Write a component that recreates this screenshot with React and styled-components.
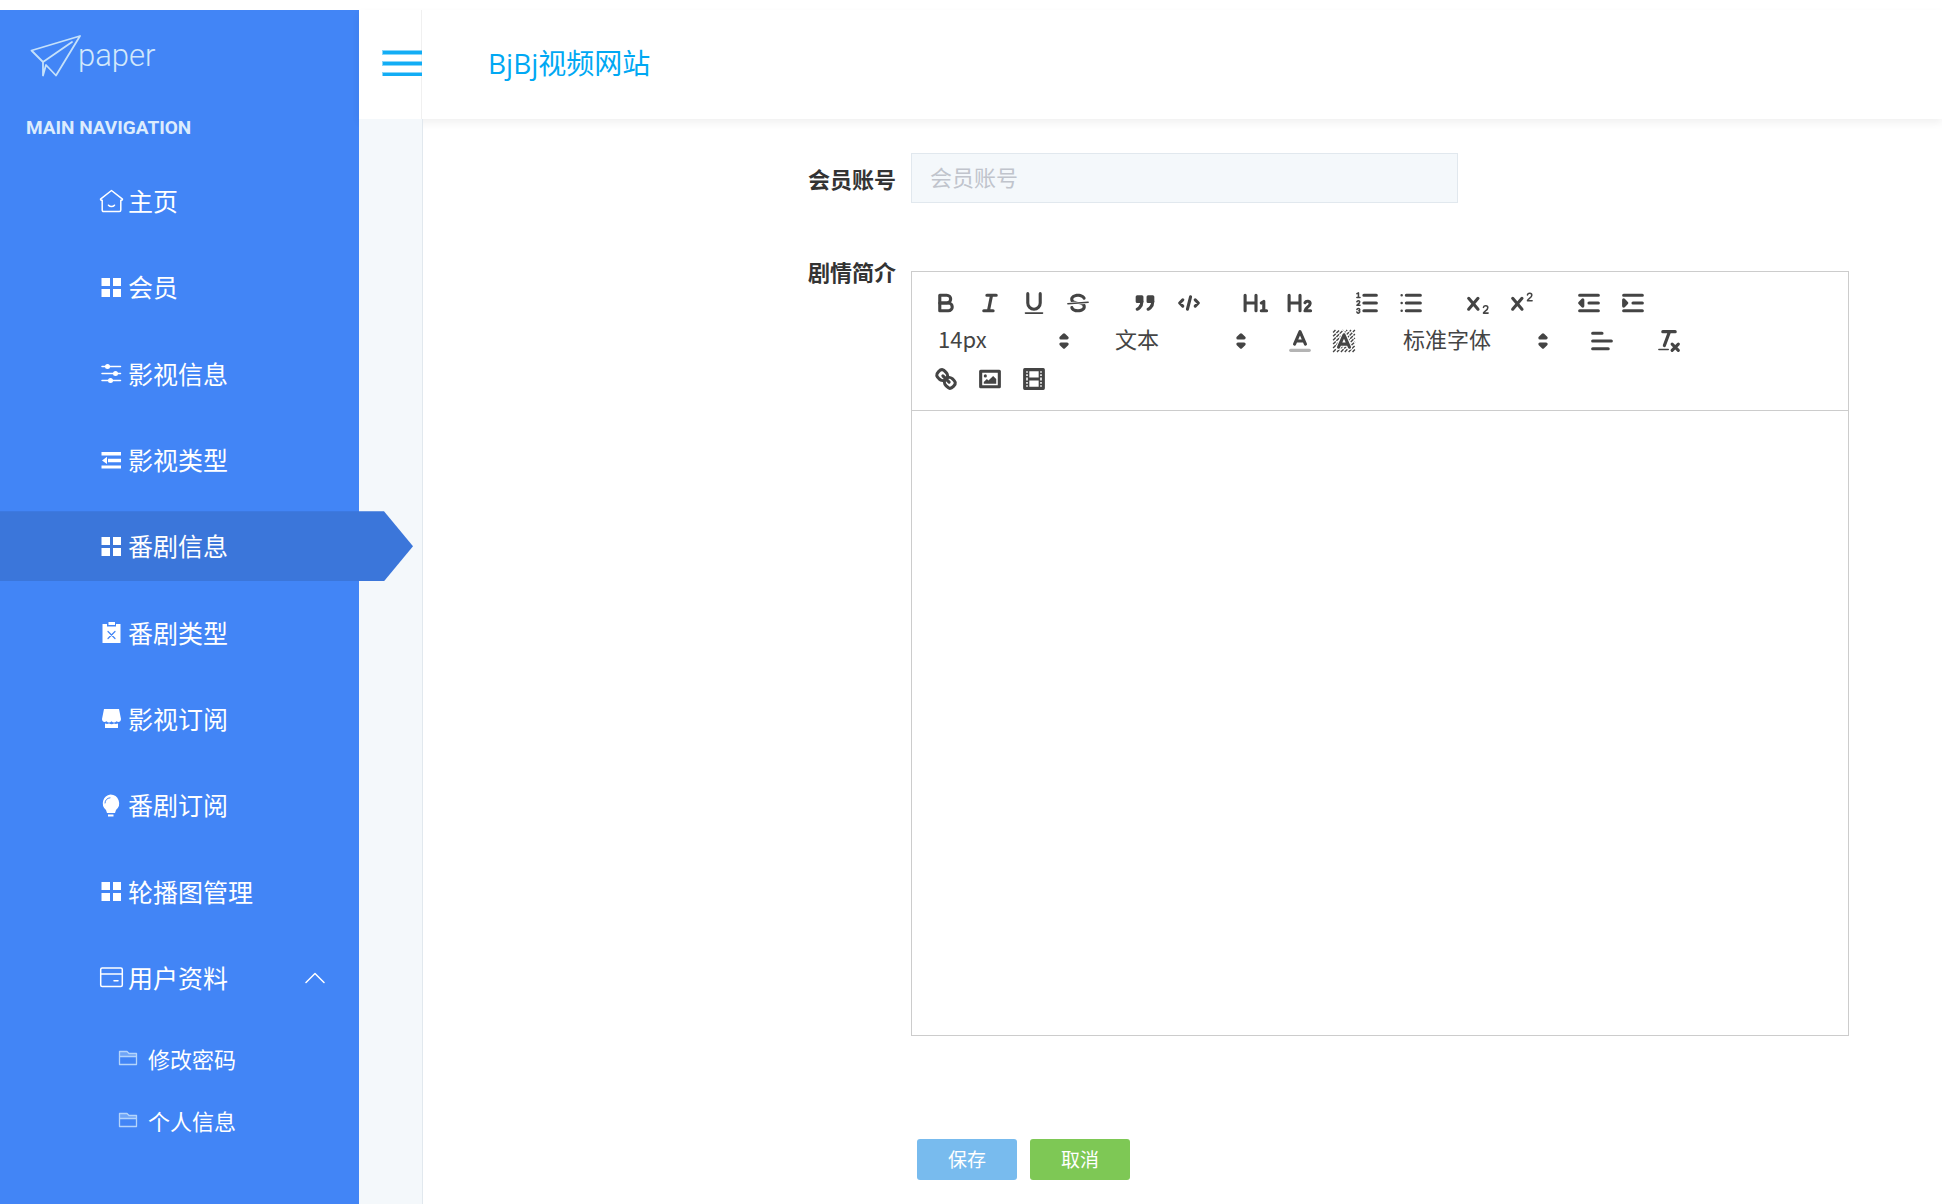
import React from 'react';
import styled, { createGlobalStyle } from 'styled-components';

const GlobalStyle = createGlobalStyle`
  *, *::before, *::after {
    box-sizing: border-box;
  }

  body {
    margin: 0;
    background: #fff;
    color: #333;
    font-family: 'Open Sans', 'Noto Sans CJK SC', sans-serif;
  }
`;

const Page = styled.div`
  display: flex;
  min-height: 100vh;
  padding-top: 10px;
`;

const Sidebar = styled.aside`
  flex: none;
  width: 359px;
  background: #4285f6;
  color: #fff;
`;

const Logo = styled.div`
  display: flex;
  padding: 24px 0 0 30px;

  svg {
    overflow: visible;
  }
`;

const Paper = styled.span`
  font-family: Roboto, sans-serif;
  font-size: 31px;
  font-weight: 300;
  line-height: 44px;
  color: #d2e8fb;
`;

const NavTitle = styled.h2`
  margin: 0;
  padding: 38px 0 0 26px;
  font-family: Roboto, sans-serif;
  font-size: 19px;
  font-weight: 700;
  line-height: 24px;
  color: #dcecfd;
`;

const Menu = styled.ul`
  display: grid;
  grid-template-columns: minmax(0, 1fr);
  grid-auto-rows: 1fr;
  min-height: 863px;
  margin: 0;
  padding: 0;
  list-style: none;
`;

const Nav = styled.nav`
  padding-top: 18px;
`;

const MenuItem = styled.li`
  display: flex;
  align-items: center;
`;

const MenuLink = styled.a`
  display: flex;
  flex: none;
  align-items: center;
  gap: 4px;
  width: ${({ $active }) => ($active ? '413px' : '100%')};
  height: 70px;
  padding: 0 34px 0 99px;
  background: ${({ $active }) => ($active ? '#3b76da' : 'transparent')};
  clip-path: ${({ $active }) =>
    $active ? 'polygon(0 0, 384px 0, 100% 50%, 384px 100%, 0 100%)' : 'none'};
  color: #fff;
  font-size: 25px;
  line-height: 36px;
  text-decoration: none;

  svg {
    flex: none;
  }

  svg:last-child {
    margin-left: auto;
  }
`;

const SubMenu = styled.ul`
  margin: 0;
  padding: 6px 0 0;
  list-style: none;
`;

const SubLink = styled.a`
  display: flex;
  align-items: center;
  gap: 10px;
  height: 62px;
  padding-left: 118px;
  color: #fff;
  font-size: 22px;
  text-decoration: none;
`;

const Content = styled.div`
  display: flex;
  flex: 1;
  flex-direction: column;
  min-width: 0;
`;

const Header = styled.header`
  display: flex;
  align-items: stretch;
  height: 109px;
  background: #fff;
  box-shadow: 0 4px 8px rgba(0, 0, 0, 0.06);
`;

const ToggleButton = styled.button`
  display: flex;
  align-items: center;
  justify-content: flex-end;
  width: 63px;
  padding: 0 0 3px;
  border: 0;
  border-right: 1px solid #f0f0f0;
  background: none;

  svg {
    margin-right: -1px;
  }
`;

const SiteTitle = styled.h1`
  margin: 0;
  padding-left: 66px;
  color: #00a8f3;
  font-size: 28px;
  font-weight: 400;
  line-height: 107px;
`;

const Body = styled.div`
  display: flex;
  flex: 1;
`;

const Gutter = styled.div`
  flex: none;
  width: 64px;
  border-right: 1px solid #e1e8ee;
  background: #f4f8fb;
`;

const Form = styled.form`
  display: flex;
  flex: 1;
  flex-direction: column;
  min-width: 0;
  padding: 34px 93px 24px 0;
`;

const Field = styled.div`
  display: flex;
  align-items: flex-start;
  margin-bottom: 41px;
`;

const Label = styled.label`
  flex: none;
  width: 488px;
  padding-right: 15px;
  color: #333;
  font-size: 22px;
  font-weight: 700;
  line-height: 52px;
  text-align: right;
`;

const TextInput = styled.input`
  width: 547px;
  height: 50px;
  padding: 0 18px 2px;
  border: 1px solid #e1e8ee;
  border-radius: 0;
  background: #f4f8fb;
  font-family: inherit;
  font-size: 22px;

  &::placeholder {
    color: #c0c4cc;
  }
`;

const Editor = styled.div`
  flex: 1;
  min-width: 0;
  margin-top: 25px;
  border: 1px solid #ccc;
`;

const Toolbar = styled.div`
  padding: 12px;
  border-bottom: 1px solid #ccc;
`;

const ToolRow = styled.div`
  display: flex;
  gap: 23px;
  height: 38px;
`;

const ToolGroup = styled.span`
  display: flex;
`;

const ToolButton = styled.button`
  display: flex;
  align-items: center;
  justify-content: center;
  width: 44px;
  height: 38px;
  padding: 0;
  border: 0;
  background: none;
  color: #444;
`;

const Picker = styled.span`
  position: relative;
  width: ${({ $wide }) => ($wide ? '168px' : '154px')};
  color: #444;

  svg {
    position: absolute;
    top: 5px;
    right: 0;
    pointer-events: none;
  }
`;

const PickerSelect = styled.select`
  width: 100%;
  height: 30px;
  padding: 0 28px 0 14px;
  border: 0;
  appearance: none;
  background: none;
  color: #444;
  font-family: 'Noto Sans CJK SC', sans-serif;
  font-size: 22px;
`;

const EditArea = styled.textarea`
  display: block;
  width: 100%;
  height: 624px;
  padding: 18px 24px;
  border: 0;
  outline: 0;
  resize: none;
  background: none;
  font-family: inherit;
  font-size: 20px;
`;

const Actions = styled.div`
  display: flex;
  gap: 13px;
  padding: 62px 0 0 494px;
`;

const ActionButton = styled.button`
  width: 100px;
  height: 41px;
  padding: 0 0 2px;
  border: 0;
  border-radius: 3px;
  background: ${({ $color }) => $color};
  color: #fff;
  font-family: inherit;
  font-size: 19px;
`;

const Stroke = styled.svg`
  fill: none;
  stroke: currentColor;
  stroke-width: 2;
  stroke-linecap: round;
  stroke-linejoin: round;

  .fill {
    fill: currentColor;
  }

  .solid {
    fill: currentColor;
    stroke: none;
  }

  .thin {
    stroke-width: 1;
  }
`;

const QIcon = ({ children }) => (
    <Stroke width="28" height="28" viewBox="0 0 18 18" aria-hidden="true">{children}</Stroke>
);

// diagonal hatching inside a 14x14 square
const hatch = [5.5, 8, 10.5, 13, 15.5, 18, 20.5, 23, 25.5, 28, 30.5]
    .map(sum => {
        const from = Math.max(2, sum - 16);
        const to = Math.min(16, sum - 2);
        return `M${from} ${sum - from}L${to} ${sum - to}`;
    })
    .join('');

const tools = {
    bold: (
        <>
            <path d="M5,4H9.5A2.5,2.5,0,0,1,12,6.5v0A2.5,2.5,0,0,1,9.5,9H5Z" />
            <path d="M5,9h5.5A2.5,2.5,0,0,1,13,11.5v0A2.5,2.5,0,0,1,10.5,14H5Z" />
        </>
    ),
    italic: <path d="M7 4H13M5 14H11M8 14L10 4" />,
    underline: (
        <>
            <path d="M5,3V9a4,4,0,0,0,8,0V3" />
            <rect className="solid" height="1" width="12" x="3" y="15" rx="0.5" />
        </>
    ),
    strike: (
        <>
            <path className="thin" d="M15.5 8.5L2.5 9.5" />
            <path className="solid" d="M9.007,8C6.542,7.791,6,7.519,6,6.5,6,5.792,7.283,5,9,5c1.571,0,2.765.679,2.969,1.309a1,1,0,0,0,1.9-.617C13.356,4.106,11.354,3,9,3,6.2,3,4,4.538,4,6.5a3.2,3.2,0,0,0,.5,1.843Z" />
            <path className="solid" d="M8.984,10C11.457,10.208,12,10.479,12,11.5c0,0.708-1.283,1.5-3,1.5-1.571,0-2.765-.679-2.969-1.309a1,1,0,1,0-1.9.617C4.644,13.894,6.646,15,9,15c2.8,0,5-1.538,5-3.5a3.2,3.2,0,0,0-.5-1.843Z" />
        </>
    ),
    quote: (
        <>
            <rect className="fill" height="3" width="3" x="4" y="5" />
            <rect className="fill" height="3" width="3" x="11" y="5" />
            <path className="fill" d="M7,8c0,4.031-3,5-3,5" />
            <path className="fill" d="M14,8c0,4.031-3,5-3,5" />
        </>
    ),
    code: <path d="M5 7L3 9L5 11M13 7L15 9L13 11M10 5L8 13" />,
    h1: (
        <>
            <path d="M2 4V14M9 4V14M2 9H9" />
            <path d="M12.4 9L14 8V14M12.4 14H15.8" />
        </>
    ),
    h2: (
        <>
            <path d="M2 4V14M9 4V14M2 9H9" />
            <path d="M12.2 8.8C13 7.4 15.6 7.6 15.5 9.5C15.4 11.3 12.3 12.1 12.2 14H15.8" />
        </>
    ),
    ordered: (
        <>
            <path d="M7 4H15M7 9H15M7 14H15" />
            <path className="thin" d="M2.5 5.5H4.5M2.5 3L3.5 2.5V5.5" />
            <path className="thin" d="M4.5,10.5h-2c0-.234,1.85-1.076,1.85-2.234A.959.959,0,0,0,2.5,8.156" />
            <path className="thin" d="M2.5,14.846a.959.959,0,0,0,1.85-.11A.7.7,0,0,0,3.75,14a.688.688,0,0,0,.6-.736.959.959,0,0,0-1.85-.109" />
        </>
    ),
    bullet: (
        <>
            <path d="M6 4H15M6 9H15M6 14H15" />
            <path strokeWidth="1.6" d="M3 4H3.01M3 9H3.01M3 14H3.01" />
        </>
    ),
    sub: (
        <>
            <path d="M3 6L9 13M9 6L3 13" />
            <path className="thin" d="M12.5 11.8C12.9 10.3 15.3 10.5 15.3 12C15.3 13.9 12.5 14.3 12.5 15.5H15.5" />
        </>
    ),
    sup: (
        <>
            <path d="M3 6L9 13M9 6L3 13" />
            <path className="thin" d="M12.5 3.8C12.9 2.3 15.3 2.5 15.3 4C15.3 5.9 12.5 6.3 12.5 7.5H15.5" />
        </>
    ),
    outdent: (
        <>
            <path d="M3 4H15M9 9H15M3 14H15" />
            <path className="fill" d="M5 7V11L3 9Z" />
        </>
    ),
    indent: (
        <>
            <path d="M3 4H15M9 9H15M3 14H15" />
            <path className="fill" d="M3 7V11L5 9Z" />
        </>
    ),
    color: (
        <>
            <path opacity="0.4" d="M3 15H15" />
            <path d="M5.5 11L9 3L12.5 11M11.63 9H6.38" />
        </>
    ),
    background: (
        <>
            <path strokeWidth="0.9" strokeLinecap="butt" strokeDasharray="2.4 0.6" d={hatch} />
            <path stroke="#fff" strokeWidth="3.4" d="M5.5 13L9 5L12.5 13M11.63 11H6.38" />
            <path d="M5.5 13L9 5L12.5 13M11.63 11H6.38" />
        </>
    ),
    align: <path d="M3 4H9M3 9H15M3 14H13" />,
    clean: (
        <>
            <path d="M5 3H13M6 12L9.35 3M11 11L15 15M15 11L11 15" />
            <rect className="solid" height="1" width="7" x="2" y="14" rx="0.5" />
        </>
    ),
    link: (
        <>
            <path d="M7 7L11 11" />
            <path d="M8.9,4.577a3.476,3.476,0,0,1,.36,4.679A3.476,3.476,0,0,1,4.577,8.9C3.185,7.5,2.035,6.4,4.217,4.217S7.5,3.185,8.9,4.577Z" />
            <path d="M13.423,9.1a3.476,3.476,0,0,0-4.679-.36,3.476,3.476,0,0,0,.36,4.679c1.392,1.392,2.5,2.542,4.679.36S14.815,10.5,13.423,9.1Z" />
        </>
    ),
    image: (
        <>
            <rect height="10" width="12" x="3" y="4" />
            <circle className="solid" cx="6" cy="7" r="1" />
            <path className="solid" d="M5 12V11L7 9L8 10L11 7L13 9V12Z" />
        </>
    ),
    video: (
        <>
            <rect height="12" width="12" x="3" y="3" />
            <path className="solid" d="M5 3H6V15H5ZM12 3H13V15H12ZM5 8H13V10H5ZM3 5H6V6H3ZM3 7H6V8H3ZM3 10H6V11H3ZM3 12H6V13H3ZM12 5H15V6H12ZM12 7H15V8H12ZM12 10H15V11H12ZM12 12H15V13H12Z" />
        </>
    )
};

const menuIcons = {
    home: <path strokeWidth="1.5" d="M1.5 10.2L12.5 1.5L23.5 10.2L22.8 11.2H21.8V21C21.8 22 21.3 22.5 20.3 22.5H4.7C3.7 22.5 3.2 22 3.2 21V11.2H2.2ZM9.5 16.2C11 18 14 18 15.5 16.2" />,
    grid: <path className="solid" d="M2.5 3H11V11H2.5ZM14 3H22V11H14ZM2.5 14H11V22H2.5ZM14 14H22V22H14Z" />,
    sliders: (
        <>
            <path strokeWidth="1.5" d="M3 5.5H21.5M3 12.5H21.5M3 19.5H21.5" />
            <circle className="solid" cx="8.5" cy="5.5" r="2.5" />
            <circle className="solid" cx="16.5" cy="12.5" r="2.5" />
            <circle className="solid" cx="11.5" cy="19.5" r="2.5" />
        </>
    ),
    fold: <path className="solid" d="M2.5 4H22V7.4H2.5ZM9 10.8H22V14.2H9ZM2.5 17.4H22V20.6H2.5ZM8 8.8V16L3 12.4Z" />,
    clipboard: (
        <>
            <path className="solid" d="M3.5 4H8V6.5H17V4H21.5V23H3.5Z" />
            <rect className="solid" x="9.5" y="2" width="6.5" height="3" />
            <path stroke="#4285f6" strokeWidth="1.2" d="M9 11.5L16 18.5M16 11.5L9 18.5" />
        </>
    ),
    shop: (
        <>
            <path className="solid" d="M5 3H20L22 13C22 15.5 19.5 17 17.5 15.2C16 17 14 17 12.5 15.2C11 17 9 17 7.5 15.2C5.5 17 3 15.5 3 13Z" />
            <path className="solid" d="M6 17.5C8 18.2 9 17.8 10 17.5C12 18.4 13.5 18.4 15 17.5C16.5 18.2 17.5 18 19 17.5V22H6Z" />
        </>
    ),
    bulb: (
        <>
            <path className="solid" d="M11.5 1.5A8.8 8.8 0 0 1 17 17L16 20H8L7 17A8.8 8.8 0 0 1 11.5 1.5ZM9 21.5H14.5V23.5H9Z" />
            <path stroke="#4285f6" strokeWidth="1" d="M6 10C6.1 7.2 8 5 11 4.8" />
        </>
    ),
    card: (
        <>
            <rect strokeWidth="1.5" x="1.7" y="3" width="21.6" height="18.5" rx="1.5" />
            <path strokeWidth="1.5" d="M2 9H23M15 15.7H19" />
        </>
    )
};

const MenuIcon = ({ name }) => (
    <Stroke width="25" height="25" viewBox="0 0 25 25" aria-hidden="true">{menuIcons[name]}</Stroke>
);

const FolderIcon = () => (
    <Stroke width="20" height="16" viewBox="0 0 20 16" color="#b4d4fb" aria-hidden="true">
        <path className="solid" opacity="0.4" d="M1 1H9L11 3H19V6H1Z" />
        <path strokeWidth="1.3" d="M1.5 14.5V1.5H9L11 3.5H18.5V14.5ZM1.5 6.5H18.5" />
    </Stroke>
);

const items = [
    { label: '主页', icon: 'home' },
    { label: '会员', icon: 'grid' },
    { label: '影视信息', icon: 'sliders' },
    { label: '影视类型', icon: 'fold' },
    { label: '番剧信息', icon: 'grid', active: true },
    { label: '番剧类型', icon: 'clipboard' },
    { label: '影视订阅', icon: 'shop' },
    { label: '番剧订阅', icon: 'bulb' },
    { label: '轮播图管理', icon: 'grid' },
    { label: '用户资料', icon: 'card', open: true }
];

const Tools = ({ names }) => (
    <ToolGroup>
        {names.map(name => (
            <ToolButton key={name} type="button" aria-label={name}>
                <QIcon>{tools[name]}</QIcon>
            </ToolButton>
        ))}
    </ToolGroup>
);

const ToolPicker = ({ label, value, wide }) => (
    <Picker $wide={wide}>
        <PickerSelect aria-label={label}>
            <option>{value}</option>
        </PickerSelect>
        <QIcon>
            <path className="fill" d="M7 11L9 13L11 11Z" />
            <path className="fill" d="M7 7L9 5L11 7Z" />
        </QIcon>
    </Picker>
);

const App = () => (
    <>
        <GlobalStyle />
        <Page>
            <Sidebar>
                <Logo>
                    <Stroke width="48" height="44" viewBox="0 0 48 44" color="#c5e1fa" aria-hidden="true">
                        <path strokeWidth="1.8" d="M1.5 16.5L50 2L26 41.5L16 31L13 41.5V28L1.5 16.5ZM13 28L42 8" />
                    </Stroke>
                    <Paper>paper</Paper>
                </Logo>
                <NavTitle>MAIN NAVIGATION</NavTitle>
                <Nav>
                    <Menu>
                        {items.map(item => (
                            <MenuItem key={item.label}>
                                <MenuLink href="#" $active={item.active}>
                                    <MenuIcon name={item.icon} />
                                    <span>{item.label}</span>
                                    {item.open && (
                                        <Stroke width="20" height="12" viewBox="0 0 20 12" aria-hidden="true">
                                            <path strokeWidth="1.5" d="M1 10.5L10 1.5L19 10.5" />
                                        </Stroke>
                                    )}
                                </MenuLink>
                            </MenuItem>
                        ))}
                    </Menu>
                    <SubMenu>
                        {['修改密码', '个人信息'].map(label => (
                            <li key={label}>
                                <SubLink href="#">
                                    <FolderIcon />
                                    {label}
                                </SubLink>
                            </li>
                        ))}
                    </SubMenu>
                </Nav>
            </Sidebar>
            <Content>
                <Header>
                    <ToggleButton type="button" aria-label="menu">
                        <svg width="40" height="26" viewBox="0 0 40 26" fill="#12adf5" aria-hidden="true">
                            <path opacity="0.5" d="M0 0H40V5H0ZM0 11H40V16H0ZM0 22H40V26H0Z" />
                            <path d="M1 1H40V4H1ZM1 12H40V15H1ZM1 23H40V26H1Z" />
                        </svg>
                    </ToggleButton>
                    <SiteTitle>BjBj视频网站</SiteTitle>
                </Header>
                <Body>
                    <Gutter />
                    <Form>
                        <Field>
                            <Label htmlFor="account">会员账号</Label>
                            <TextInput id="account" type="text" placeholder="会员账号" />
                        </Field>
                        <Field>
                            <Label htmlFor="intro">剧情简介</Label>
                            <Editor>
                                <Toolbar>
                                    <ToolRow>
                                        <Tools names={['bold', 'italic', 'underline', 'strike']} />
                                        <Tools names={['quote', 'code']} />
                                        <Tools names={['h1', 'h2']} />
                                        <Tools names={['ordered', 'bullet']} />
                                        <Tools names={['sub', 'sup']} />
                                        <Tools names={['outdent', 'indent']} />
                                    </ToolRow>
                                    <ToolRow>
                                        <ToolPicker label="size" value="14px" />
                                        <ToolPicker label="header" value="文本" />
                                        <Tools names={['color', 'background']} />
                                        <ToolPicker label="font" value="标准字体" wide />
                                        <Tools names={['align']} />
                                        <Tools names={['clean']} />
                                    </ToolRow>
                                    <ToolRow>
                                        <Tools names={['link', 'image', 'video']} />
                                    </ToolRow>
                                </Toolbar>
                                <EditArea id="intro" />
                            </Editor>
                        </Field>
                        <Actions>
                            <ActionButton type="submit" $color="#78bbee">保存</ActionButton>
                            <ActionButton type="button" $color="#7ec855">取消</ActionButton>
                        </Actions>
                    </Form>
                </Body>
            </Content>
        </Page>
    </>
);

export default App;
